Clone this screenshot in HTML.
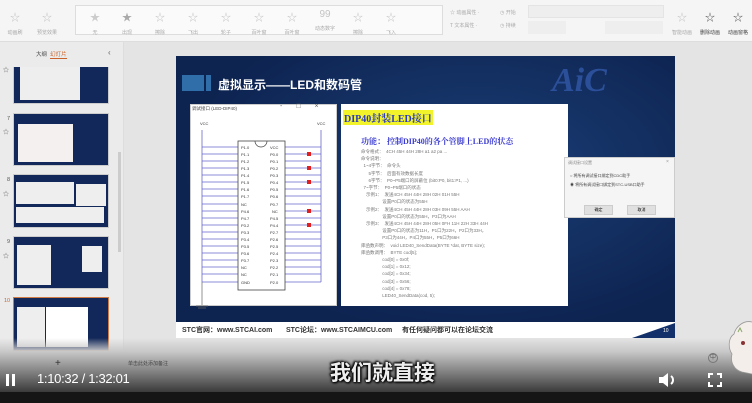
<!DOCTYPE html>
<html><head><meta charset="utf-8"><style>
*{margin:0;padding:0;box-sizing:border-box}
body{width:752px;height:403px;overflow:hidden;background:#e4e4e4;font-family:"Liberation Sans","Noto Sans CJK SC",sans-serif;position:relative}
.a{position:absolute}
.tb{left:0;top:0;width:752px;height:42px;background:#f5f5f5;border-bottom:1px solid #ddd}
.ic{position:absolute;top:9px;font-size:10px;color:#c4c4c4;text-align:center;width:30px}
.ic small{display:block;font-size:5px;color:#aaa;margin-top:5px}
.lp{left:0;top:42px;width:124px;height:330px;background:#ebebeb;border-right:1px solid #ddd}
.th{position:absolute;left:13px;width:96px;background:#13285a;border:1px solid #ccc}
.slide{left:176px;top:56px;width:499px;height:282px;background:radial-gradient(ellipse at 60% 40%,#1c3f78,#0d2350 70%)}
.foot{left:176px;top:322px;width:499px;height:16px;background:#fff}
.doc{left:341px;top:104px;width:227px;height:202px;background:#fff}
.doc p{font-size:4.5px;color:#777;white-space:pre;line-height:7.2px;position:absolute;left:20px}
</style></head><body>
<div class="a tb">
 <div class="ic" style="left:0">☆<small>动画刷</small></div>
 <div class="ic" style="left:32px">☆<small>预览效果</small></div>
 <div class="a" style="left:75px;top:5px;width:368px;height:30px;border:1px solid #ddd;background:#fafafa"></div>
 <div class="ic" style="left:80px;color:#ccc">★<small>无</small></div>
 <div class="ic" style="left:112px;color:#aaa">★<small>出现</small></div>
 <div class="ic" style="left:145px">☆<small>擦除</small></div>
 <div class="ic" style="left:178px">☆<small>飞出</small></div>
 <div class="ic" style="left:211px">☆<small>轮子</small></div>
 <div class="ic" style="left:244px">☆<small>百叶窗</small></div>
 <div class="ic" style="left:277px">☆<small>百叶窗</small></div>
 <div class="ic" style="left:310px">99<small>动态数字</small></div>
 <div class="ic" style="left:343px">☆<small>擦除</small></div>
 <div class="ic" style="left:376px">☆<small>飞入</small></div>
 <div class="a" style="left:450px;top:9px;font-size:5px;color:#aaa">☆ 动画属性 ·<br><br>T 文本属性 ·</div>
 <div class="a" style="left:500px;top:9px;font-size:5px;color:#aaa">◷ 开始<br><br>◷ 持续</div>
 <div class="a" style="left:528px;top:5px;width:136px;height:13px;background:#eee;border:1px solid #e4e4e4"></div>
 <div class="a" style="left:528px;top:21px;width:38px;height:13px;background:#eee"></div>
 <div class="a" style="left:605px;top:21px;width:58px;height:13px;background:#eee"></div>
 <div class="ic" style="left:674px;width:24px;left:670px">☆<small>智能动画</small></div>
 <div class="ic" style="left:696px;color:#555;width:28px">☆<small style="color:#444">删除动画</small></div>
 <div class="ic" style="left:724px;color:#555;width:28px">☆<small style="color:#444">动画窗格</small></div>
</div>
<div class="a lp">
 <div class="a" style="left:36px;top:8px;font-size:5.5px;color:#444">大纲 &nbsp;<span style="color:#c9632b;border-bottom:1px solid #c9632b">幻灯片</span></div>
 <div class="a" style="left:108px;top:6px;font-size:8px;color:#666">‹</div>
 <div class="a" style="left:118px;top:110px;width:3px;height:100px;background:#ccc"></div>
</div>
<div class="th" style="top:67px;height:37px;border-top:none"><div class="a" style="left:6px;top:0;width:60px;height:33px;background:#eee"></div></div>
<div class="th" style="top:113px;height:53px"><div class="a" style="left:4px;top:10px;width:55px;height:38px;background:#f4f0f0"></div></div>
<div class="th" style="top:174px;height:54px"><div class="a" style="left:2px;top:7px;width:58px;height:22px;background:#eee"></div><div class="a" style="left:62px;top:9px;width:30px;height:22px;background:#eee"></div><div class="a" style="left:2px;top:32px;width:88px;height:16px;background:#eee"></div></div>
<div class="th" style="top:236px;height:53px"><div class="a" style="left:3px;top:8px;width:34px;height:40px;background:#eee"></div><div class="a" style="left:68px;top:9px;width:20px;height:26px;background:#eee"></div></div>
<div class="th" style="top:297px;height:54px;border:1px solid #d07a45"><div class="a" style="left:3px;top:9px;width:28px;height:40px;background:#eee"></div><div class="a" style="left:32px;top:9px;width:42px;height:40px;background:#fff"></div></div>
<div class="a" style="left:3px;top:65px;font-size:6px;color:#555">☆</div>
<div class="a" style="left:7px;top:116px;font-size:5.5px;color:#555">7</div>
<div class="a" style="left:3px;top:127px;font-size:6px;color:#555">☆</div>
<div class="a" style="left:7px;top:177px;font-size:5.5px;color:#555">8</div>
<div class="a" style="left:3px;top:189px;font-size:6px;color:#555">☆</div>
<div class="a" style="left:7px;top:239px;font-size:5.5px;color:#555">9</div>
<div class="a" style="left:3px;top:251px;font-size:6px;color:#555">☆</div>
<div class="a" style="left:4px;top:298px;font-size:5.5px;color:#c9632b">10</div>

<div class="a slide"></div>
<div class="a" style="left:182px;top:75px;width:22px;height:16px;background:#2f6ea8"></div>
<div class="a" style="left:206px;top:75px;width:5px;height:16px;background:#2f6ea8"></div>
<div class="a" style="left:218px;top:76px;font-size:12px;font-weight:bold;color:#fff">虚拟显示——LED和数码管</div>
<div class="a" style="left:552px;top:62px;font-size:34px;font-style:italic;font-weight:bold;color:#2c4f9a;font-family:'Liberation Serif',serif">AiC</div>
<div class="a foot"></div>
<div class="a" style="left:182px;top:325px;font-size:7px;font-weight:bold;color:#333;white-space:nowrap">STC官网：www.STCAI.com &nbsp; &nbsp; &nbsp; STC论坛：www.STCAIMCU.com &nbsp; &nbsp; 有任何疑问都可以在论坛交流</div>
<div class="a" style="left:632px;top:323px;width:0;height:0;border-left:43px solid transparent;border-bottom:15px solid #13306a"></div>
<div class="a" style="left:663px;top:328px;font-size:5px;color:#fff">10</div>

<div class="a" style="left:190px;top:104px;width:147px;height:202px;background:#fff;border:1px solid #ccc"></div>
<div class="a" style="left:192px;top:106px;font-size:4.5px;color:#444">调试接口 (LED-DIP40)</div>
<div class="a" style="left:280px;top:103px;font-size:7px;color:#666;letter-spacing:14px">-□×</div>
<svg class="a" style="left:0;top:0" width="752" height="403">
<g stroke="#6a6acc" stroke-width="0.8" fill="none">
<path d="M202 130V282M321 130V282M202 147H238M202 154H238M202 161H238M202 168H238M202 175H238M202 182H238M202 189H238M202 196H238M202 204H238M202 211H238M202 218H238M202 225H238M202 232H238M202 239H238M202 246H238M202 253H238M202 260H238M202 267H238M202 274H238M202 282H238M285 147H321M285 154H321M285 161H321M285 168H321M285 175H321M285 182H321M285 189H321M285 196H321M285 204H321M285 211H321M285 218H321M285 225H321M285 232H321M285 239H321M285 246H321M285 253H321M285 260H321M285 267H321M285 274H321M285 282H321"/>
</g>
<path d="M202 282V305M196 306H208M198 308H206" stroke="#666" stroke-width="0.7"/>
<rect x="238" y="141" width="47" height="149" fill="#fff" stroke="#444" stroke-width="0.8"/>
<path d="M255 141a6 6 0 0 0 12 0" fill="none" stroke="#444" stroke-width="0.7"/>
<g fill="#e02020"><rect x="307" y="152" width="4" height="4"/><rect x="307" y="166" width="4" height="4"/><rect x="307" y="180" width="4" height="4"/><rect x="307" y="209" width="4" height="4"/><rect x="307" y="223" width="4" height="4"/></g>
<g font-size="4" fill="#333" font-family="Liberation Sans">
<text x="200" y="125">VCC</text><text x="317" y="125">VCC</text>
<text x="241" y="149">P1.0</text><text x="241" y="156">P1.1</text><text x="241" y="163">P1.2</text><text x="241" y="170">P1.3</text><text x="241" y="177">P1.4</text><text x="241" y="184">P1.5</text><text x="241" y="191">P1.6</text><text x="241" y="198">P1.7</text><text x="241" y="206">NC</text><text x="241" y="213">P4.6</text><text x="241" y="220">P4.7</text><text x="241" y="227">P3.2</text><text x="241" y="234">P3.3</text><text x="241" y="241">P3.4</text><text x="241" y="248">P3.5</text><text x="241" y="255">P3.6</text><text x="241" y="262">P3.7</text><text x="241" y="269">NC</text><text x="241" y="276">NC</text><text x="241" y="284">GND</text>
<text x="270" y="149">VCC</text><text x="270" y="156">P0.0</text><text x="270" y="163">P0.1</text><text x="270" y="170">P0.2</text><text x="270" y="177">P0.3</text><text x="270" y="184">P0.4</text><text x="270" y="191">P0.5</text><text x="270" y="198">P0.6</text><text x="270" y="206">P0.7</text><text x="272" y="213">NC</text><text x="270" y="220">P4.5</text><text x="270" y="227">P4.4</text><text x="270" y="234">P2.7</text><text x="270" y="241">P2.6</text><text x="270" y="248">P2.5</text><text x="270" y="255">P2.4</text><text x="270" y="262">P2.3</text><text x="270" y="269">P2.2</text><text x="270" y="276">P2.1</text><text x="270" y="284">P2.0</text>
</g>
</svg>

<div class="a doc">
 <div class="a" style="left:2px;top:6px;background:#f3f32a;font-family:'Liberation Serif','Noto Serif CJK SC',serif;font-weight:bold;font-size:10px;color:#2a3bc0;padding:0 1px">DIP40封装LED接口</div>
 <div class="a" style="left:20px;top:32px;font-family:'Liberation Serif','Noto Serif CJK SC',serif;font-weight:bold;font-size:8px;color:#3a3ad0">功能： 控制DIP40的各个管脚上LED的状态</div>
 <p style="top:44px">命令格式：  4CH 45H 44H 28H a1 a2 pa ...
命令说明：
  1~4字节：  命令头
      5字节：  后面有效数据长度
      6字节：  P0~P5端口的屏蔽位 (bit0:P0, bit1:P1, ...)
  7~字节：  P0~P5端口的状态
    示例1：  发送4CH 45H 44H 28H 02H 01H 55H
                 设置P0口的状态为55H
    示例2：  发送4CH 45H 44H 28H 03H 09H 55H AAH
                 设置P0口的状态为55H，P3口为AAH
    示例3：  发送4CH 45H 44H 28H 05H 0FH 11H 22H 33H 44H
                 设置P0口的状态为11H，P1口为22H，P2口为33H，
                 P3口为44H，P4口为55H，P5口为66H
库函数声明：  void LED40_SendData(BYTE *dat, BYTE size);
库函数调用：  BYTE cod[5];
                 cod[0] = 0x0f;
                 cod[1] = 0x12;
                 cod[2] = 0x34;
                 cod[3] = 0x56;
                 cod[4] = 0x78;
                 LED40_SendData(cod, 5);</p>
</div>
<div class="a" style="left:564px;top:157px;width:111px;height:61px;background:#f5f5f5;border:1px solid #ccc">
 <div class="a" style="left:3px;top:2px;font-size:4px;color:#888">调试接口设置</div>
 <div class="a" style="left:101px;top:1px;font-size:5px;color:#999">×</div>
 <div class="a" style="left:5px;top:13px;font-size:4px;color:#444;line-height:9px">○ 将所有调试接口绑定到CDC助手<br>◉ 将所有调试接口绑定到STC-USB口助手</div>
 <div class="a" style="left:19px;top:47px;width:29px;height:10px;background:#e0e0e0;border:1px solid #ccc;font-size:4px;text-align:center;line-height:8px">确定</div>
 <div class="a" style="left:62px;top:47px;width:29px;height:10px;background:#e0e0e0;border:1px solid #ccc;font-size:4px;text-align:center;line-height:8px">取消</div>
</div>

<div class="a" style="left:0;top:338px;width:752px;height:54px;background:linear-gradient(#e4e4e400,#c8c8c8 25%,#6a6a6a 75%,#3a3a3a)"></div>
<div class="a" style="left:0;top:392px;width:752px;height:11px;background:#151515"></div>
<div class="a" style="left:128px;top:360px;font-size:5px;color:#444">单击此处添加备注</div>
<div class="a" style="left:55px;top:358px;font-size:10px;color:#333">+</div>
<div class="a" style="left:6px;top:374px;width:3px;height:12px;background:#fff"></div>
<div class="a" style="left:12px;top:374px;width:3px;height:12px;background:#fff"></div>
<div class="a" style="left:37px;top:371px;font-size:13px;color:#fff;letter-spacing:-0.3px">1:10:32 / 1:32:01</div>
<div class="a" style="left:330px;top:357px;font-size:21px;font-weight:bold;color:#eee;text-shadow:0 0 2px #000,0 0 3px #000,1px 1px 2px #000,-1px -1px 2px #000">我们就直接</div>
<svg class="a" style="left:658px;top:372px" width="20" height="16" viewBox="0 0 20 16"><path d="M1 5h4l5-4v14l-5-4H1z" fill="#fff"/><path d="M13 4a5 5 0 0 1 0 8" stroke="#fff" stroke-width="2" fill="none"/></svg>
<svg class="a" style="left:708px;top:373px" width="14" height="14"><path d="M1 5V1h4M9 1h4v4M13 9v4H9M5 13H1V9" stroke="#fff" stroke-width="2" fill="none"/></svg>
<svg class="a" style="left:718px;top:318px" width="34" height="70"><path d="M34 4C26 2 18 8 16 16C10 20 10 30 14 36C12 44 16 52 24 54L34 56" fill="#f4eeea" stroke="#999" stroke-width="0.8"/><circle cx="25" cy="25" r="2" fill="#833"/><path d="M20 14l2-4 2 4" stroke="#8a6" fill="none"/></svg>
<div class="a" style="left:708px;top:353px;width:10px;height:10px;border:1px solid #777;border-radius:50%;font-size:6px;text-align:center;color:#555;line-height:8px">中</div>
</body></html>
